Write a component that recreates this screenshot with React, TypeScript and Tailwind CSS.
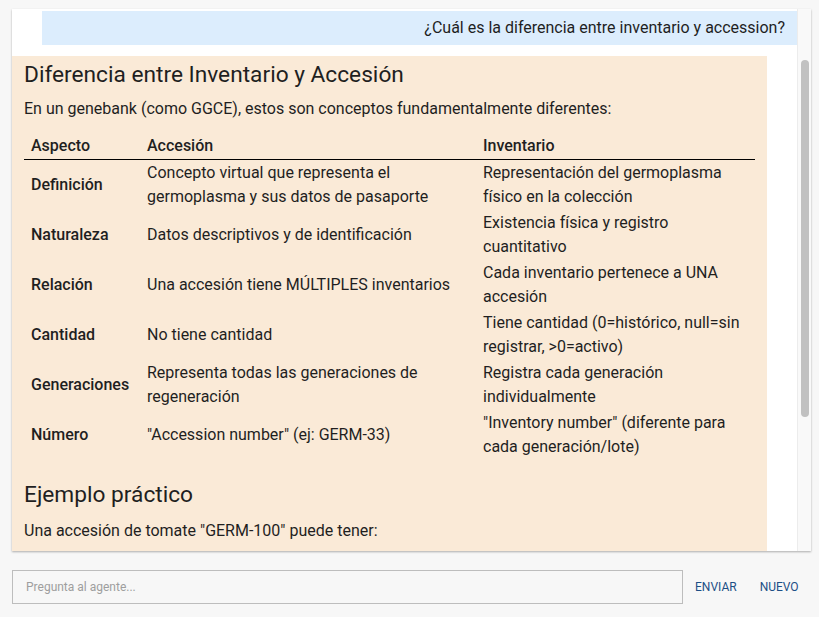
import React from "react";

type Row = { aspect: string; accession: string; inventory: string };

const rows: Row[] = [
  {
    aspect: "Definición",
    accession: "Concepto virtual que representa el germoplasma y sus datos de pasaporte",
    inventory: "Representación del germoplasma físico en la colección",
  },
  {
    aspect: "Naturaleza",
    accession: "Datos descriptivos y de identificación",
    inventory: "Existencia física y registro cuantitativo",
  },
  {
    aspect: "Relación",
    accession: "Una accesión tiene MÚLTIPLES inventarios",
    inventory: "Cada inventario pertenece a UNA accesión",
  },
  {
    aspect: "Cantidad",
    accession: "No tiene cantidad",
    inventory: "Tiene cantidad (0=histórico, null=sin registrar, >0=activo)",
  },
  {
    aspect: "Generaciones",
    accession: "Representa todas las generaciones de regeneración",
    inventory: "Registra cada generación individualmente",
  },
  {
    aspect: "Número",
    accession: '"Accession number" (ej: GERM-33)',
    inventory: '"Inventory number" (diferente para cada generación/lote)',
  },
];

const UserMessage = ({ text }: { text: string }) => (
  <div className="ml-[30px] bg-[#dcedfd] px-3 py-[5px] text-right text-base leading-6">
    {text}
  </div>
);

const AgentMessage = () => (
  <div className="mr-[30px] flex-1 bg-[#faead7] px-3 pt-[5px]">
    <h2 className="text-[22.7px] leading-7 font-normal">
      Diferencia entre Inventario y Accesión
    </h2>
    <p className="mt-2 text-base leading-6">
      En un genebank (como GGCE), estos son conceptos fundamentalmente diferentes:
    </p>

    <table className="mt-3 w-[731px] table-fixed border-collapse text-base leading-6">
      <colgroup>
        <col className="w-[116px]" />
        <col className="w-[336px]" />
        <col className="w-[279px]" />
      </colgroup>
      <thead>
        <tr className="border-b border-black">
          <th className="px-[7px] py-px text-left font-medium">Aspecto</th>
          <th className="px-[7px] py-px text-left font-medium">Accesión</th>
          <th className="px-[7px] py-px text-left font-medium">Inventario</th>
        </tr>
      </thead>
      <tbody>
        {rows.map((r) => (
          <tr key={r.aspect}>
            <td className="px-[7px] py-px align-middle font-medium">{r.aspect}</td>
            <td className="px-[7px] py-px align-middle">{r.accession}</td>
            <td className="px-[7px] py-px align-middle">{r.inventory}</td>
          </tr>
        ))}
      </tbody>
    </table>

    <h2 className="mt-[21px] text-[22.7px] leading-7 font-normal">Ejemplo práctico</h2>
    <p className="mt-[10px] text-base leading-6">
      Una accesión de tomate "GERM-100" puede tener:
    </p>
  </div>
);

// thin track on the right of the chat log
const ScrollTrack = () => (
  <div className="flex w-[14px] shrink-0 justify-center border-l border-[#ececec] bg-[#f9f9f9]">
    <div className="mt-[51px] h-[357px] w-2 rounded-full bg-[#c1c1c1]" />
  </div>
);

export default function App() {
  return (
    <div className="flex h-screen flex-col bg-[#f7f7f7] font-['Roboto',sans-serif] text-[#1f1f1f]">
      <div className="mt-[9px] ml-3 mr-2 flex h-[542px] bg-white shadow-[0_1px_2px_rgba(0,0,0,0.3)]">
        <div className="flex flex-1 flex-col gap-[11px] overflow-hidden pt-[2px]">
          <UserMessage text="¿Cuál es la diferencia entre inventario y accession?" />
          <AgentMessage />
        </div>
        <ScrollTrack />
      </div>

      <div className="mt-[19px] ml-3 mr-5 flex items-center">
        <input
          className="h-[34px] w-[671px] border border-[#bdbdbd] bg-transparent px-[13px] text-xs text-[#212121] outline-none placeholder:text-[#9e9e9e]"
          placeholder="Pregunta al agente..."
        />
        <button className="ml-3 text-xs text-[#1d4f86]">ENVIAR</button>
        <button className="ml-[23px] text-xs text-[#1d4f86]">NUEVO</button>
      </div>
    </div>
  );
}
